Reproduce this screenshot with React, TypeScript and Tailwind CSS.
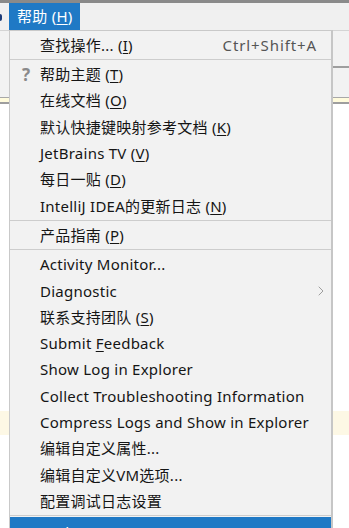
import { ChevronRight } from "lucide-react";

type Item = {
  label: string;
  key?: string;
  pre?: string;
  post?: string;
  shortcut?: string;
  icon?: boolean;
  sub?: boolean;
};

type Entry = Item | "sep";

const ENTRIES: Entry[] = [
  { label: "查找操作...", key: "I", shortcut: "Ctrl+Shift+A" },
  "sep",
  { label: "帮助主题", key: "T", icon: true },
  { label: "在线文档", key: "O" },
  { label: "默认快捷键映射参考文档", key: "K" },
  { label: "JetBrains TV", key: "V" },
  { label: "每日一贴", key: "D" },
  { label: "IntelliJ IDEA的更新日志", key: "N" },
  "sep",
  { label: "产品指南", key: "P" },
  "sep",
  { label: "Activity Monitor..." },
  { label: "Diagnostic", sub: true },
  { label: "联系支持团队", key: "S" },
  { label: "", pre: "Submit ", key: "F", post: "eedback" },
  { label: "Show Log in Explorer" },
  { label: "Collect Troubleshooting Information" },
  { label: "Compress Logs and Show in Explorer" },
  { label: "编辑自定义属性..." },
  { label: "编辑自定义VM选项..." },
  { label: "配置调试日志设置" },
  "sep",
];

function Label({ item }: { item: Item }) {
  if (item.pre !== undefined) {
    return (
      <span>
        {item.pre}
        <span className="underline underline-offset-2">{item.key}</span>
        {item.post}
      </span>
    );
  }
  return (
    <span>
      {item.label}
      {item.key && (
        <>
          {" ("}
          <span className="underline underline-offset-2">{item.key}</span>
          {")"}
        </>
      )}
    </span>
  );
}

export default function App() {
  return (
    <div
      className="relative w-[349px] h-[528px] overflow-hidden bg-white text-[15px] text-[#151515] tracking-[0.25px]"
      style={{ fontFamily: '"Noto Sans", "Noto Sans CJK SC", sans-serif' }}
    >
      {/* window chrome behind the popup */}
      <div className="h-[3px] bg-[#8a8a8a]" />
      <div className="h-[27px] bg-[#f0f0f0] flex items-stretch">
        <div className="w-[9px] relative">
          <span className="absolute left-0 top-[11px] w-[2px] h-[7px] bg-[#1d3b78] rounded-r" />
        </div>
        <div className="w-[71px] bg-[#1f79c5] text-white flex items-center pl-[8px]">
          帮助 (<span className="underline underline-offset-2">H</span>)
        </div>
      </div>
      <div className="h-px bg-[#d4d4d4]" />
      <div className="h-[66px] bg-[#f2f2f2] flex flex-col">
        <div className="h-[35px]" />
        <div className="h-[2px] bg-[#9e9e9e] ml-[320px]" />
      </div>
      <div className="h-px bg-[#a8a8a8]" />
      <div className="h-[4px] bg-[#fffbdc]" />
      <div className="h-[2px] bg-[#9e9e9e]" />
      <div className="h-[307px]" />
      <div className="h-[24px] bg-[#fdf8e5]" />

      {/* popup menu */}
      <div className="absolute left-[9px] top-[30px] w-[324px] h-[498px] bg-[#f2f2f2] border-l border-t border-[#c9c9c9] border-r-2 border-r-[#c6c6c6] pt-[1px]">
        {ENTRIES.map((e, i) =>
          e === "sep" ? (
            <div key={i} className="h-[3px] flex items-center">
              <div className="h-px w-full bg-[#cdcdcd]" />
            </div>
          ) : (
            <div key={i} className="h-[26.3px] flex items-center relative pl-[30px] pr-[14px]">
              {e.icon && (
                <span className="absolute left-[12px] text-[#8a8a8a] font-bold text-[17px] leading-none">?</span>
              )}
              <Label item={e} />
              <span className="flex-1" />
              {e.shortcut && <span className="text-[#555] tracking-[0.9px]">{e.shortcut}</span>}
              {e.sub && <ChevronRight size={16} strokeWidth={1.2} className="text-[#888] -mr-[12px]" />}
            </div>
          )
        )}
        <div className="h-[20px] bg-[#1f79c5] text-white pl-[30px] pt-[5px] leading-[20px]">Eval Reset</div>
      </div>
    </div>
  );
}
